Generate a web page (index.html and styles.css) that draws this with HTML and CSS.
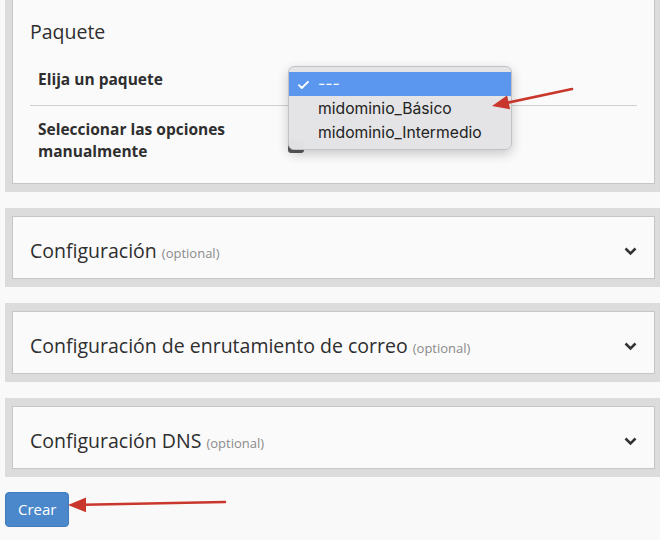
FILE: index.html
```html
<!DOCTYPE html>
<html lang="es">
<head>
<meta charset="utf-8">
<title>Paquete</title>
<link rel="stylesheet" href="styles.css">
</head>
<body>
<div class="page">
  <section class="well well-first">
    <div class="panel panel-open">
      <h2 class="panel-title">Paquete</h2>
      <div class="form-row form-row-sep">
        <div class="label">Elija un paquete</div>
        <div class="control">
          <div class="select-popup">
            <div class="opt opt-selected">
              <svg class="check" viewBox="0 0 11 8" width="11" height="8"><polyline points="1,4.2 3.8,7 10,0.8" fill="none" stroke="#fff" stroke-width="1.9" stroke-linecap="round" stroke-linejoin="round"/></svg>
              ---
            </div>
            <div class="opt">midominio_Básico</div>
            <div class="opt">midominio_Intermedio</div>
          </div>
        </div>
      </div>
      <div class="form-row">
        <div class="label">Seleccionar las opciones<br>manualmente</div>
        <div class="control"><span class="checkbox"></span></div>
      </div>
    </div>
  </section>

  <section class="well">
    <div class="panel panel-head">
      <h2 class="panel-title">Configuración <small>(optional)</small></h2>
      <svg class="chev" viewBox="0 0 13 9" width="13" height="9"><polyline points="1.5,1.5 6.5,6.5 11.5,1.5" fill="none" stroke="#333" stroke-width="2.5"/></svg>
    </div>
  </section>

  <section class="well">
    <div class="panel panel-head">
      <h2 class="panel-title">Configuración de enrutamiento de correo <small>(optional)</small></h2>
      <svg class="chev" viewBox="0 0 13 9" width="13" height="9"><polyline points="1.5,1.5 6.5,6.5 11.5,1.5" fill="none" stroke="#333" stroke-width="2.5"/></svg>
    </div>
  </section>

  <section class="well">
    <div class="panel panel-head">
      <h2 class="panel-title">Configuración DNS <small>(optional)</small></h2>
      <svg class="chev" viewBox="0 0 13 9" width="13" height="9"><polyline points="1.5,1.5 6.5,6.5 11.5,1.5" fill="none" stroke="#333" stroke-width="2.5"/></svg>
    </div>
  </section>

  <button class="btn" type="button">Crear</button>
</div>

<svg class="annotations" viewBox="0 0 660 540" width="660" height="540">
  <line x1="572" y1="89" x2="506" y2="103" stroke="#c9372c" stroke-width="2.6" stroke-linecap="round"/>
  <polygon points="492,106 510.1,109.3 507.1,95.6" fill="#c9372c"/>
  <line x1="225" y1="502" x2="84" y2="504.7" stroke="#c9372c" stroke-width="2.6" stroke-linecap="round"/>
  <polygon points="68,505 86,497.5 86,512.3" fill="#c9372c"/>
</svg>
</body>
</html>
```

FILE: styles.css
```css
* { box-sizing: border-box; }

html, body {
  margin: 0;
  padding: 0;
}

body {
  width: 660px;
  height: 540px;
  overflow: hidden;
  position: relative;
  background: #f9f9f9;
  font-family: "Open Sans", "Liberation Sans", sans-serif;
  color: #2e2e2e;
}

.page {
  padding-left: 5px;
}

.well {
  background: #dcdcdc;
  padding: 8px 5px 8px 7px;
  margin-top: 16px;
}

.well-first {
  margin-top: 0;
  padding-top: 0;
}

.panel {
  background: #fafafa;
  border: 1px solid #c6c6c6;
  padding: 20px 17px 13px;
}

.panel-open {
  border-top: none;
  padding: 18px 17px 0;
}

.panel-head {
  display: flex;
  align-items: center;
  justify-content: space-between;
}

.panel-title {
  margin: 0;
  height: 28px;
  font-size: 19.5px;
  line-height: 28px;
  font-weight: 400;
  color: #2e2e2e;
  white-space: nowrap;
}

.panel-title small {
  font-size: 13px;
  line-height: 1;
  color: #8a8a8a;
}

.chev {
  display: block;
  flex: none;
  margin-top: 1px;
}

.form-row {
  display: grid;
  grid-template-columns: 250px 1fr;
  padding: 12px 8px 21px;
  font-size: 15.5px;
  line-height: 22px;
  font-weight: 700;
}

.form-row-sep {
  padding: 22px 8px 15px;
  border-bottom: 1px solid #cfcfcf;
}

.control {
  position: relative;
}

.checkbox {
  display: block;
  width: 16px;
  height: 13px;
  margin-top: 22px;
  background: #5a5a5a;
  border-radius: 3px;
}

.select-popup {
  position: absolute;
  left: 0;
  top: -2px;
  width: 224px;
  padding: 5px 0;
  background: rgba(227, 227, 229, 0.98);
  border: 1px solid #c2c2c4;
  border-radius: 6px;
  box-shadow: 0 4px 12px rgba(0, 0, 0, 0.2);
  font-family: Inter, "Noto Sans", sans-serif;
  font-weight: 400;
  font-size: 15.7px;
  line-height: 24px;
  color: #222;
  z-index: 2;
}

.opt {
  position: relative;
  height: 24px;
  padding-left: 29px;
  padding-top: 1px;
  white-space: nowrap;
}

.opt-selected {
  background: #5c97ef;
  color: #fff;
  padding-top: 0;
}

.check {
  position: absolute;
  left: 9px;
  top: 9px;
}

.btn {
  display: block;
  margin-top: 15px;
  padding: 6px 12px;
  background: #4a88cb;
  color: #fff;
  border: 1px solid #3f7bbd;
  border-radius: 4px;
  font-family: "Open Sans", "Liberation Sans", sans-serif;
  font-size: 15px;
  line-height: 21px;
}

.annotations {
  position: absolute;
  left: 0;
  top: 0;
  pointer-events: none;
  z-index: 5;
}
```
